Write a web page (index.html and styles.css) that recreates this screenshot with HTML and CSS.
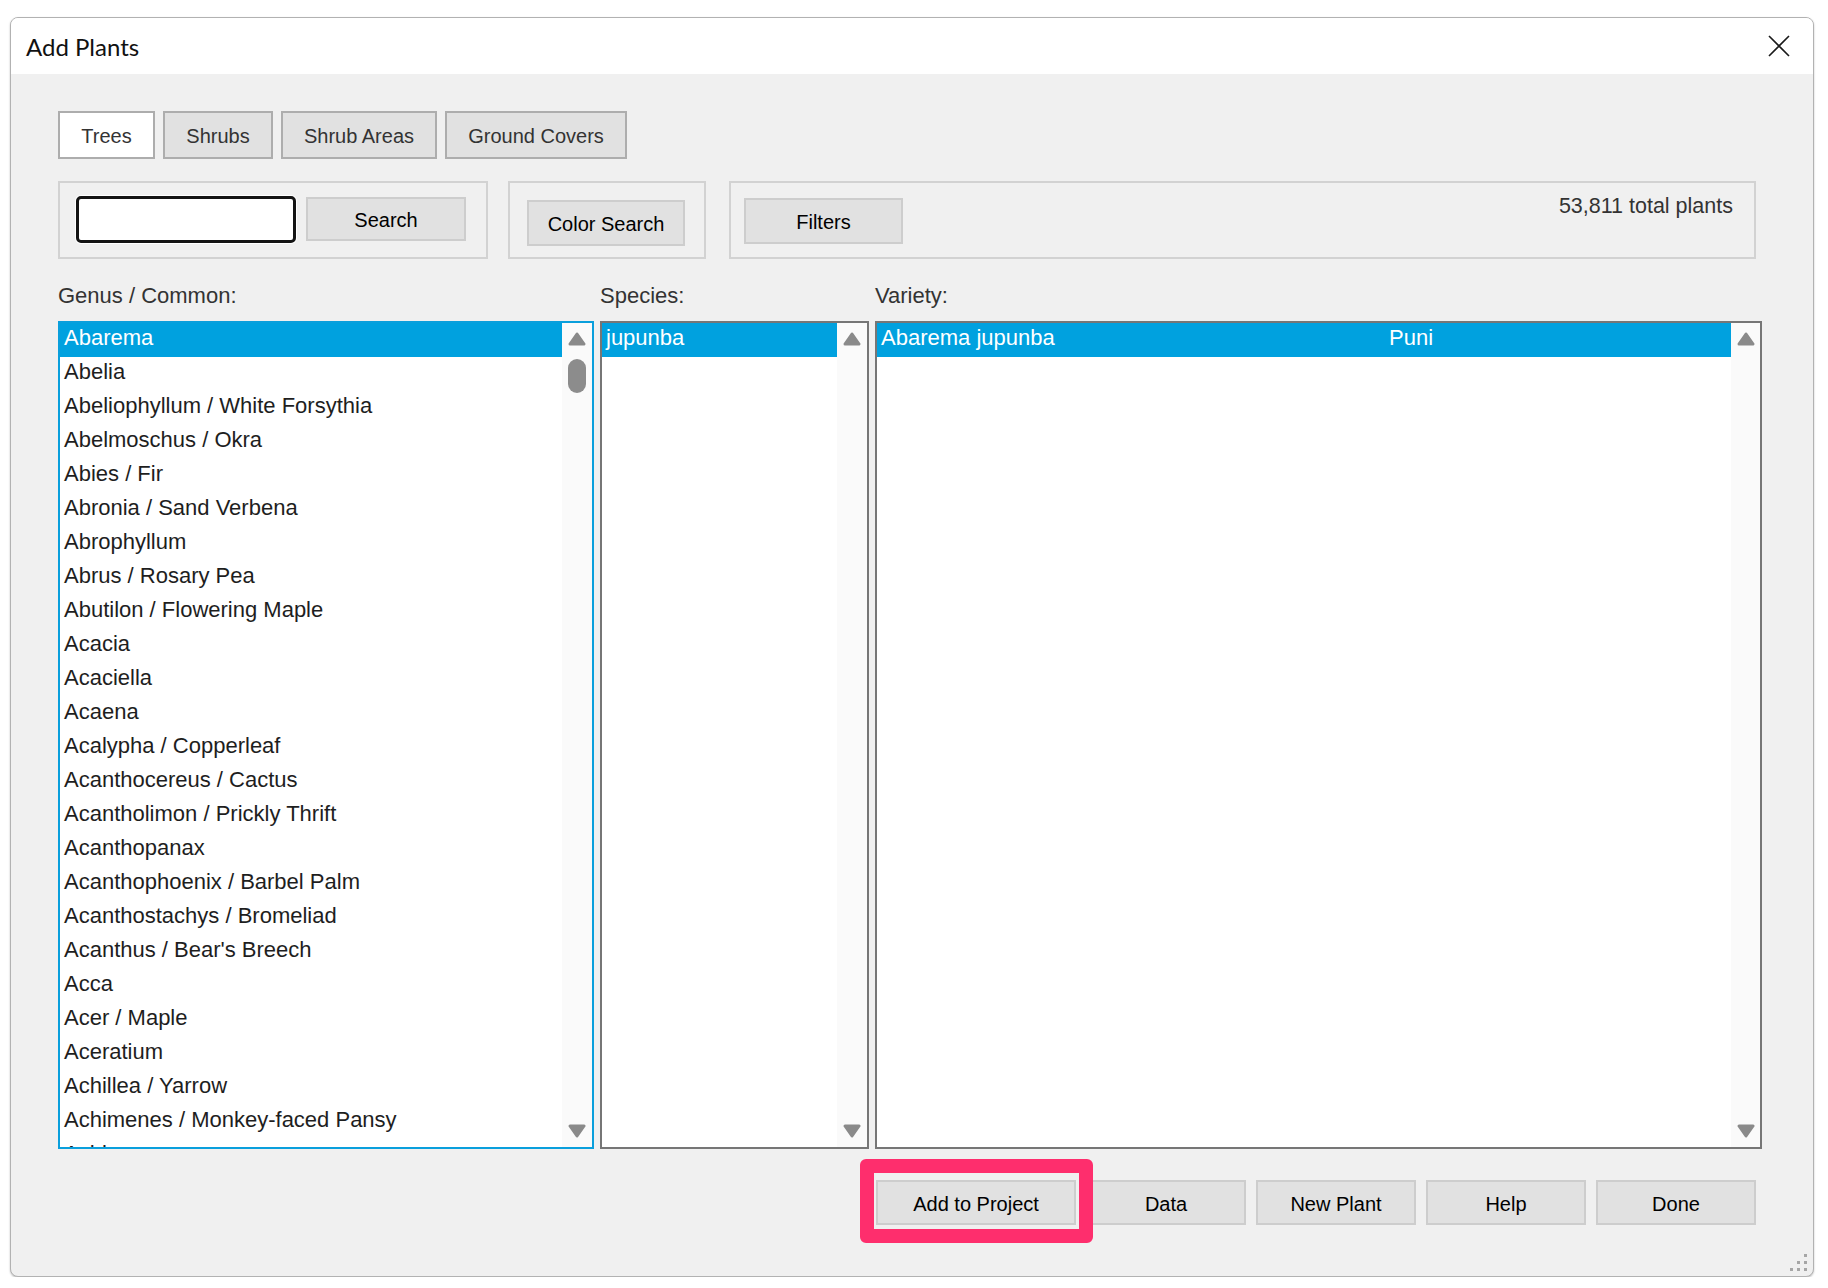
FILE: index.html
```html
<!DOCTYPE html>
<html>
<head>
<meta charset="utf-8">
<title>Add Plants</title>
<link rel="stylesheet" href="styles.css">
</head>
<body>
<div class="dialog">
  <div class="titlebar">
    <span class="title">Add Plants</span>
    <svg class="close" width="22" height="22" viewBox="0 0 22 22"><path d="M1 1 L21 21 M21 1 L1 21" stroke="#1a1a1a" stroke-width="1.6" fill="none"/></svg>
  </div>
  <div class="content">
    <div class="tabs">
      <div class="tab tab-trees active">Trees</div>
      <div class="tab tab-shrubs">Shrubs</div>
      <div class="tab tab-areas">Shrub Areas</div>
      <div class="tab tab-ground">Ground Covers</div>
    </div>
    <div class="toolbar">
      <div class="group g-search">
        <div class="input"></div>
        <div class="btn btn-search">Search</div>
      </div>
      <div class="group g-color">
        <div class="btn btn-color">Color Search</div>
      </div>
      <div class="group g-filter">
        <div class="btn btn-filter">Filters</div>
        <div class="total">53,811 total plants</div>
      </div>
    </div>
    <div class="columns">
      <div class="col col-genus">
        <div class="label">Genus / Common:</div>
        <div class="list focus">
          <div class="rows">
            <div class="row sel">Abarema</div>
            <div class="row">Abelia</div>
            <div class="row">Abeliophyllum / White Forsythia</div>
            <div class="row">Abelmoschus / Okra</div>
            <div class="row">Abies / Fir</div>
            <div class="row">Abronia / Sand Verbena</div>
            <div class="row">Abrophyllum</div>
            <div class="row">Abrus / Rosary Pea</div>
            <div class="row">Abutilon / Flowering Maple</div>
            <div class="row">Acacia</div>
            <div class="row">Acaciella</div>
            <div class="row">Acaena</div>
            <div class="row">Acalypha / Copperleaf</div>
            <div class="row">Acanthocereus / Cactus</div>
            <div class="row">Acantholimon / Prickly Thrift</div>
            <div class="row">Acanthopanax</div>
            <div class="row">Acanthophoenix / Barbel Palm</div>
            <div class="row">Acanthostachys / Bromeliad</div>
            <div class="row">Acanthus / Bear's Breech</div>
            <div class="row">Acca</div>
            <div class="row">Acer / Maple</div>
            <div class="row">Aceratium</div>
            <div class="row">Achillea / Yarrow</div>
            <div class="row">Achimenes / Monkey-faced Pansy</div>
            <div class="row">Achlys</div>
          </div>
          <div class="scroll">
            <svg class="arrow" width="18" height="14" viewBox="0 0 18 14"><path d="M9 2 L16 12 L2 12 Z" fill="#8a8a8a" stroke="#8a8a8a" stroke-width="3" stroke-linejoin="round"/></svg>
            <div class="thumb"></div>
            <div class="spacer"></div>
            <svg class="arrow" width="18" height="14" viewBox="0 0 18 14"><path d="M9 12 L16 2 L2 2 Z" fill="#8a8a8a" stroke="#8a8a8a" stroke-width="3" stroke-linejoin="round"/></svg>
          </div>
        </div>
      </div>
      <div class="col col-species">
        <div class="label">Species:</div>
        <div class="list">
          <div class="rows">
            <div class="row sel">jupunba</div>
          </div>
          <div class="scroll">
            <svg class="arrow" width="18" height="14" viewBox="0 0 18 14"><path d="M9 2 L16 12 L2 12 Z" fill="#8a8a8a" stroke="#8a8a8a" stroke-width="3" stroke-linejoin="round"/></svg>
            <div class="spacer"></div>
            <svg class="arrow" width="18" height="14" viewBox="0 0 18 14"><path d="M9 12 L16 2 L2 2 Z" fill="#8a8a8a" stroke="#8a8a8a" stroke-width="3" stroke-linejoin="round"/></svg>
          </div>
        </div>
      </div>
      <div class="col col-variety">
        <div class="label">Variety:</div>
        <div class="list">
          <div class="rows">
            <div class="row sel vrow"><span class="vname">Abarema jupunba</span><span class="vcommon">Puni</span></div>
          </div>
          <div class="scroll">
            <svg class="arrow" width="18" height="14" viewBox="0 0 18 14"><path d="M9 2 L16 12 L2 12 Z" fill="#8a8a8a" stroke="#8a8a8a" stroke-width="3" stroke-linejoin="round"/></svg>
            <div class="spacer"></div>
            <svg class="arrow" width="18" height="14" viewBox="0 0 18 14"><path d="M9 12 L16 2 L2 2 Z" fill="#8a8a8a" stroke="#8a8a8a" stroke-width="3" stroke-linejoin="round"/></svg>
          </div>
        </div>
      </div>
    </div>
    <div class="actions">
      <div class="btn btn-add">Add to Project<div class="highlight"></div></div>
      <div class="btn btn-act">Data</div>
      <div class="btn btn-act">New Plant</div>
      <div class="btn btn-act">Help</div>
      <div class="btn btn-act">Done</div>
    </div>
  </div>
  <svg class="grip" width="20" height="20" viewBox="0 0 20 20">
    <rect x="15" y="1" width="3" height="3" fill="#a6a6a6"/>
    <rect x="8" y="8" width="3" height="3" fill="#a6a6a6"/>
    <rect x="15" y="8" width="3" height="3" fill="#a6a6a6"/>
    <rect x="1" y="15" width="3" height="3" fill="#a6a6a6"/>
    <rect x="8" y="15" width="3" height="3" fill="#a6a6a6"/>
    <rect x="15" y="15" width="3" height="3" fill="#a6a6a6"/>
  </svg>
</div>
</body>
</html>
```
FILE: styles.css
```css
* { box-sizing: border-box; }

html, body {
  margin: 0;
  padding: 0;
  background: #ffffff;
}

body {
  font-family: "Liberation Sans", Arial, sans-serif;
  color: #222;
}

.dialog {
  position: relative;
  margin: 17px 0 0 10px;
  width: 1804px;
  height: 1260px;
  border: 1px solid #b2b2b2;
  border-radius: 8px;
  overflow: hidden;
  background: #f0f0f0;
  box-shadow: 0 1px 2px rgba(0, 0, 0, 0.25);
}

.titlebar {
  height: 56px;
  background: #ffffff;
  display: flex;
  align-items: center;
  justify-content: space-between;
  padding: 0 23px 0 15px;
}

.title {
  font-family: Lato, "Open Sans", sans-serif;
  font-size: 24px;
  color: #111;
}

.close { display: block; }

.content {
  padding: 37px 51px 0 47px;
}

.tabs {
  display: flex;
  gap: 8px;
  height: 48px;
}

.tab {
  height: 48px;
  border: 2px solid #adadad;
  background: #e1e1e1;
  font-size: 20px;
  color: #333;
  display: flex;
  align-items: center;
  justify-content: center;
  padding-top: 2px;
}
.tab.active { background: #ffffff; }
.tab-trees { width: 97px; }
.tab-shrubs { width: 110px; }
.tab-areas { width: 156px; }
.tab-ground { width: 182px; }

.toolbar {
  display: flex;
  margin-top: 22px;
  margin-right: 6px;
  height: 78px;
}

.group {
  height: 78px;
  border: 2px solid #d2d2d2;
  display: flex;
  align-items: flex-start;
}

.g-search {
  width: 430px;
  margin-right: 20px;
  padding: 13px 0 0 16px;
}
.g-color {
  width: 198px;
  margin-right: 23px;
  padding: 17px 0 0 17px;
}
.g-filter {
  flex: 1;
  padding: 15px 21px 0 13px;
  justify-content: space-between;
}

.input {
  width: 220px;
  height: 47px;
  background: #ffffff;
  border: 3px solid #141414;
  border-radius: 5px;
  box-shadow: 0 0 0 1px #ffffff;
}

.btn {
  background: #e1e1e1;
  border: 2px solid #cdcdcd;
  font-size: 20px;
  color: #000;
  display: flex;
  align-items: center;
  justify-content: center;
  padding-top: 3px;
}

.btn-search {
  width: 160px;
  height: 44px;
  margin: 1px 0 0 10px;
}
.btn-color {
  width: 158px;
  height: 46px;
}
.btn-filter {
  width: 159px;
  height: 46px;
}

.total {
  font-size: 21.5px;
  line-height: 25px;
  color: #333;
  margin-top: -4px;
}

.columns {
  display: flex;
  gap: 6px;
}

.col {
  padding-top: 24px;
}
.col-genus { width: 536px; }
.col-species { width: 269px; }
.col-variety { width: 887px; }

.label {
  font-size: 22px;
  line-height: 26px;
  color: #333;
  margin-bottom: 12px;
}

.list {
  height: 828px;
  border: 2px solid #767676;
  background: #ffffff;
  display: flex;
}
.list.focus { border-color: #0a9fdc; }

.rows {
  flex: 1;
  overflow: hidden;
}

.row {
  height: 34px;
  line-height: 30px;
  font-size: 22px;
  padding-left: 4px;
  color: #1e1e1e;
  white-space: nowrap;
}
.row.sel {
  background: #00a1df;
  color: #ffffff;
}

.vrow {
  display: flex;
}
.vname { width: 508px; }

.scroll {
  width: 30px;
  background: #fafafa;
  padding: 9px 6px;
  display: flex;
  flex-direction: column;
}
.col-variety .scroll { width: 29px; padding: 9px 5px 9px 6px; }

.arrow { display: block; }

.thumb {
  width: 18px;
  height: 34px;
  margin-top: 13px;
  border-radius: 9px;
  background: #8c8c8c;
}

.spacer { flex: 1; }

.actions {
  display: flex;
  justify-content: flex-end;
  gap: 10px;
  margin-top: 31px;
  margin-right: 6px;
}

.btn-add {
  position: relative;
  width: 200px;
  height: 45px;
}
.btn-act {
  width: 160px;
  height: 45px;
}

.highlight {
  position: absolute;
  left: -18px;
  top: -23px;
  width: 233px;
  height: 84px;
  border: 14px solid #fe2e6d;
  border-radius: 6px;
  z-index: 2;
  pointer-events: none;
}

.grip {
  position: absolute;
  right: 4px;
  bottom: 3px;
}
```
